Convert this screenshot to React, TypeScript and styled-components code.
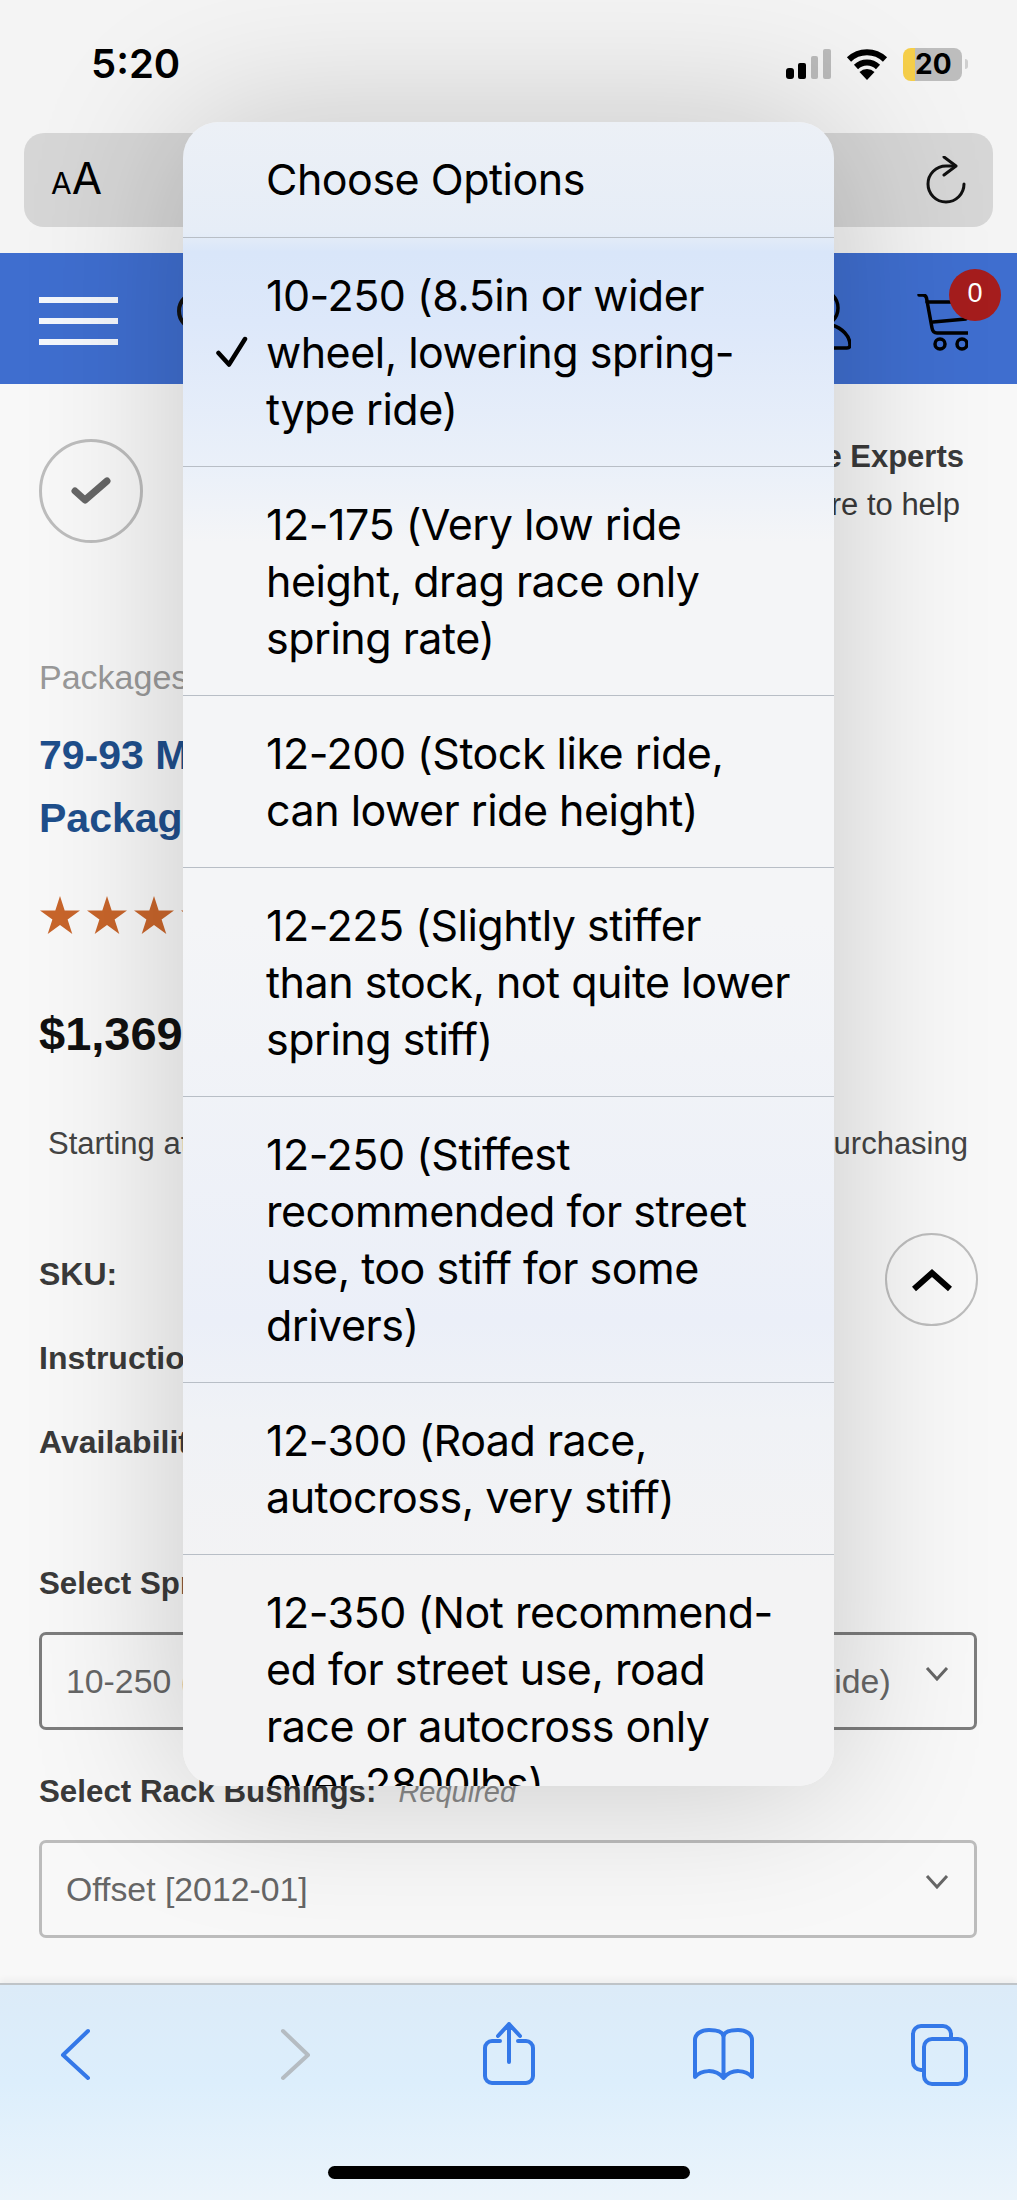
import styled, { createGlobalStyle } from 'styled-components';

const GlobalStyle = createGlobalStyle`
  html, body {
    margin: 0;
    padding: 0;
    background: #f8f8f8;
  }
  * {
    box-sizing: border-box;
  }
`;

const OPTIONS = [
  { id: 'choose', lines: ['Choose Options'] },
  {
    id: '10-250',
    selected: true,
    lines: ['10-250 (8.5in or wider', 'wheel, lowering spring-', 'type ride)'],
  },
  { id: '12-175', lines: ['12-175 (Very low ride', 'height, drag race only', 'spring rate)'] },
  { id: '12-200', lines: ['12-200 (Stock like ride,', 'can lower ride height)'] },
  { id: '12-225', lines: ['12-225 (Slightly stiffer', 'than stock, not quite lower', 'spring stiff)'] },
  {
    id: '12-250',
    lines: ['12-250 (Stiffest', 'recommended for street', 'use, too stiff for some', 'drivers)'],
  },
  { id: '12-300', lines: ['12-300 (Road race,', 'autocross, very stiff)'] },
  {
    id: '12-350',
    lines: ['12-350 (Not recommend-', 'ed for street use, road', 'race or autocross only', 'over 2800lbs)'],
  },
];

const Screen = styled.div`
  position: relative;
  display: flex;
  flex-direction: column;
  width: 1017px;
  height: 2200px;
  overflow: hidden;
  background: #f8f8f8;
  font-family: 'Liberation Sans', Arial, sans-serif;
  color: #333;
`;

const Chrome = styled.div`
  background: #f4f4f4;
  padding-bottom: 26px;
`;

const StatusBar = styled.div`
  display: flex;
  align-items: center;
  justify-content: space-between;
  height: 133px;
  padding: 0 49px 5px 91px;
  font-family: Inter, sans-serif;
`;

const Time = styled.span`
  font-size: 40px;
  font-weight: 600;
  line-height: 40px;
  color: #000;
`;

const StatusIcons = styled.div`
  display: flex;
  align-items: center;
  gap: 15px;
`;

const Battery = styled.div`
  display: flex;
  align-items: center;
  gap: 3px;
`;

const BatteryBody = styled.div`
  width: 59px;
  height: 33px;
  padding-left: 12px;
  border-radius: 8px;
  background: linear-gradient(90deg, #f6cf4a 12px, #bdbdbd 12px);
  font-size: 28px;
  font-weight: 700;
  line-height: 33px;
  color: #000;
`;

const BatteryNub = styled.div`
  width: 3px;
  height: 10px;
  border-radius: 0 4px 4px 0;
  background: #cfcfcf;
`;

const AddressBar = styled.div`
  display: flex;
  align-items: center;
  justify-content: space-between;
  height: 94px;
  margin: 0 24px;
  padding: 0 27px 0 27px;
  border-radius: 20px;
  background: #d6d6d6;
  font-family: Inter, sans-serif;
  color: #000;
`;

const TextSize = styled.span`
  display: flex;
  align-items: baseline;
  font-size: 44px;
  font-weight: 400;
  line-height: 44px;

  & small {
    font-size: 30px;
  }
`;

const Header = styled.div`
  display: flex;
  align-items: center;
  height: 131px;
  padding: 0 49px 0 39px;
  background: #3f6ecf;
`;

const Hamburger = styled.div`
  display: flex;
  flex-direction: column;
  gap: 15px;
  width: 79px;
  margin: 5px 59px 0 0;

  & span {
    height: 6px;
    background: #f4f7fc;
  }
`;

const Logo = styled.svg`
  margin-bottom: 16px;
`;

const HeaderActions = styled.div`
  display: flex;
  align-items: center;
  gap: 65px;
  margin-left: auto;
`;

const CartWrap = styled.div`
  position: relative;
  height: 58px;
  margin-top: 9px;
`;

const CartBadge = styled.span`
  position: absolute;
  top: -25px;
  left: 33px;
  width: 52px;
  height: 52px;
  border-radius: 50%;
  background: #a51d1d;
  font-size: 27px;
  line-height: 48px;
  text-align: center;
  color: #fff;
`;

const Content = styled.div`
  display: flex;
  flex-direction: column;
  padding: 49px 40px 0 39px;
`;

const TrustRow = styled.div`
  display: flex;
  align-items: flex-start;
  justify-content: space-between;
  height: 110px;
  padding-right: 13px;
`;

const CheckCircle = styled.div`
  display: flex;
  align-items: center;
  justify-content: center;
  width: 104px;
  height: 104px;
  margin-top: 6px;
  border: 3px solid #bdbdbd;
  border-radius: 50%;
`;

const TrustText = styled.div`
  text-align: right;
  font-size: 31px;
  line-height: 48px;
  color: #3a3a3a;

  & b {
    display: block;
  }
  & span {
    display: block;
    margin-right: 4px;
  }
`;

const Category = styled.div`
  margin-top: 114px;
  font-size: 34px;
  line-height: 40px;
  color: #999;
`;

const Title = styled.h1`
  margin: 27px 0 0;
  font-size: 41px;
  font-weight: 700;
  line-height: 63px;
  color: #1f4f8c;
`;

const Stars = styled.div`
  display: flex;
  gap: 7px;
  margin: 45px 0 0 1px;
`;

const Price = styled.div`
  margin-top: 71px;
  font-size: 47px;
  font-weight: 700;
  line-height: 56px;
  color: #111;
`;

const Financing = styled.div`
  display: flex;
  justify-content: space-between;
  margin-top: 62px;
  padding: 0 9px 0 9px;
  font-size: 31px;
  line-height: 40px;
  color: #444;
`;

const Specs = styled.div`
  display: flex;
  flex-direction: column;
  gap: 44px;
  margin-top: 90px;
`;

const SpecLabel = styled.div`
  font-size: 32px;
  font-weight: 700;
  line-height: 40px;
  color: #3a3a3a;
`;

const FieldLabel = styled.div<{ $top: number }>`
  display: flex;
  align-items: baseline;
  gap: 22px;
  margin-top: ${(p) => p.$top}px;
  font-size: 31.3px;
  font-weight: 700;
  line-height: 40px;
  color: #3a3a3a;

  & em {
    font-size: 29px;
    font-weight: 400;
    color: #8a8a8a;
  }
`;

const Select = styled.div<{ $active?: boolean }>`
  display: flex;
  align-items: center;
  justify-content: space-between;
  height: 98px;
  margin-top: 28px;
  padding: 0 25px 0 24px;
  border: 3px solid ${(p) => (p.$active ? '#7d7d7d' : '#bcbcbc')};
  border-radius: 7px;
  font-size: 33.8px;
  color: #666;
  white-space: nowrap;

  & svg {
    margin-bottom: 14px;
  }
`;

const ScrollTop = styled.div`
  position: absolute;
  top: 1233px;
  left: 885px;
  display: flex;
  align-items: center;
  justify-content: center;
  width: 93px;
  height: 93px;
  border: 2px solid #bdbdbd;
  border-radius: 50%;
`;

const Toolbar = styled.div`
  display: flex;
  flex-direction: column;
  align-items: center;
  height: 217px;
  margin-top: auto;
  padding-top: 37px;
  border-top: 2px solid #bfc4c8;
  background: linear-gradient(180deg, #dcebf8 0%, #dceefc 45%, #ebf4fb 100%);
  box-shadow: 0 -4px 6px rgba(0, 0, 0, 0.04);
`;

const ToolbarIcons = styled.div`
  display: flex;
  gap: 156px;
  align-self: flex-start;
  padding-left: 45px;
`;

const ToolbarSlot = styled.svg`
  flex: none;
  width: 60px;
  height: 64px;
  overflow: visible;
  fill: none;
  stroke: ${(p) => p.color ?? '#3478e8'};
  stroke-width: 4;
  stroke-linecap: round;
  stroke-linejoin: round;
`;

const HomeIndicator = styled.div`
  width: 362px;
  height: 13px;
  margin-top: auto;
  margin-bottom: 21px;
  border-radius: 7px;
  background: #000;
`;

const Menu = styled.div`
  position: absolute;
  top: 122px;
  left: 183px;
  width: 651px;
  height: 1664px;
  overflow: hidden;
  border-radius: 36px;
  background: linear-gradient(
    180deg,
    #ecf0f6 0,
    #e6edf7 110px,
    #d9e6f9 130px,
    #dde8fa 200px,
    #eaf0f9 344px,
    #f4f5f7 420px,
    #f4f5f7 800px,
    #ebeff8 1200px,
    #f0f2f6 1300px,
    #f3f3f4 1450px
  );
  box-shadow: 0 0 160px rgba(0, 0, 0, 0.2);
  font-family: Inter, sans-serif;
  color: #000;
`;

const MenuRow = styled.div`
  position: relative;
  padding: 29px 20px 28px 83px;
  border-bottom: 1px solid #b8bec6;
  font-size: 43px;
  line-height: 57px;
  letter-spacing: -0.5px;
  white-space: nowrap;

  &:first-child {
    padding-bottom: 29px;
  }
  &:last-child {
    border-bottom: 0;
  }
`;

const MenuLine = styled.span`
  display: block;
`;

const MenuCheck = styled.svg`
  position: absolute;
  top: 50%;
  left: 33px;
  width: 32px;
  height: 32px;
  margin-top: -16px;
`;

const Star = () => (
  <svg width="40" height="40" viewBox="0 0 40 40">
    <path
      d="M20 1l4.700 14.500H40L27.600 24.500 32.300 39 20 30 7.700 39l4.700-14.500L0 15.500h15.300z"
      fill="#c8652b"
    />
  </svg>
);

const Chevron = () => (
  <svg width="24" height="14" viewBox="0 0 24 14" fill="none" stroke="#666" strokeWidth="3">
    <path d="M2 1l10 11L22 1" />
  </svg>
);

const App = () => {
  return (
    <Screen>
      <GlobalStyle />
      <Chrome>
        <StatusBar>
          <Time>5:20</Time>
          <StatusIcons>
            <svg width="45" height="30" viewBox="0 0 45 30">
              <rect x="0" y="19" width="8" height="11" rx="3" fill="#000" />
              <rect x="12" y="14" width="8" height="16" rx="2" fill="#000" />
              <rect x="25" y="7" width="7" height="23" rx="2" fill="#bbb" />
              <rect x="37" y="0" width="8" height="30" rx="2" fill="#bbb" />
            </svg>
            <svg width="42" height="32" viewBox="0 0 42 32">
              <path d="M3 11.500a26 26 0 0 1 36 0M10 19a16 16 0 0 1 22 0" fill="none" stroke="#000" strokeWidth="6" />
              <path d="M21 32l-7.500-8a11 11 0 0 1 15 0z" fill="#000" />
            </svg>
            <Battery>
              <BatteryBody>20</BatteryBody>
              <BatteryNub />
            </Battery>
          </StatusIcons>
        </StatusBar>
        <AddressBar>
          <TextSize>
            <small>A</small>A
          </TextSize>
          <svg width="40" height="48" viewBox="0 0 40 48" fill="none" stroke="#111" strokeWidth="3" strokeLinecap="round" strokeLinejoin="round">
            <path d="M29 10h-9a18 18 0 1 0 18 18" />
            <path d="M18 1l12 9-12 9" />
          </svg>
        </AddressBar>
      </Chrome>

      <Header>
        <Hamburger>
          <span />
          <span />
          <span />
        </Hamburger>
        <Logo width="40" height="40" viewBox="0 0 40 40" fill="none" stroke="#111" strokeWidth="4">
          <circle cx="20" cy="20" r="18" />
        </Logo>
        <HeaderActions>
          <svg width="62" height="62" viewBox="0 0 62 62" fill="none" stroke="#000" strokeWidth="3.500" strokeLinecap="round" strokeLinejoin="round">
            <circle cx="31" cy="20" r="18" />
            <path d="M4 60h54c2 0 3-1 3-3 0-9-8-17-18-20M18 37C8 40 1 48 1 57c0 2 1 3 3 3" />
          </svg>
          <CartWrap>
            <svg width="52" height="58" viewBox="0 0 52 58" fill="none" stroke="#000" strokeWidth="3.500" strokeLinecap="round" strokeLinejoin="round">
              <path d="M3 1h4c2 0 3 1 3.500 3L16 34c.5 3 2 5 5 5h31" />
              <path d="M11 8h26" />
              <path d="M17 28l33-3" />
              <circle cx="24" cy="50" r="5" />
              <circle cx="46" cy="50" r="5" />
            </svg>
            <CartBadge>0</CartBadge>
          </CartWrap>
        </HeaderActions>
      </Header>

      <Content>
        <TrustRow>
          <CheckCircle>
            <svg width="40" height="30" viewBox="0 0 40 30" fill="none" stroke="#666" strokeWidth="7" strokeLinecap="round" strokeLinejoin="round">
              <path d="M4 15l10 9L36 5" />
            </svg>
          </CheckCircle>
          <TrustText>
            <b>Talk to The Experts</b>
            <span>We are here to help</span>
          </TrustText>
        </TrustRow>
        <Category>Packages</Category>
        <Title>
          79-93 Mustang Coilover
          <br />
          Package
        </Title>
        <Stars>
          <Star />
          <Star />
          <Star />
          <Star />
          <Star />
        </Stars>
        <Price>$1,369.00</Price>
        <Financing>
          <span>Starting at</span>
          <span>when purchasing</span>
        </Financing>
        <Specs>
          <SpecLabel>SKU:</SpecLabel>
          <SpecLabel>Instructions:</SpecLabel>
          <SpecLabel>Availability:</SpecLabel>
        </Specs>
        <FieldLabel $top={102}>Select Spring Rate:</FieldLabel>
        <Select $active>
          <span>10-250 (8.5in or wider wheel, lowering spring-type ride)</span>
          <Chevron />
        </Select>
        <FieldLabel $top={42}>
          Select Rack Bushings: <em>Required</em>
        </FieldLabel>
        <Select>
          <span>Offset [2012-01]</span>
          <Chevron />
        </Select>
      </Content>

      <ScrollTop>
        <svg width="40" height="24" viewBox="0 0 40 24" fill="none" stroke="#000" strokeWidth="6">
          <path d="M2 21L20 5l18 16" />
        </svg>
      </ScrollTop>

      <Toolbar>
        <ToolbarIcons>
          <ToolbarSlot viewBox="0 0 60 64">
            <path d="M43 9L18 33l25 23" />
          </ToolbarSlot>
          <ToolbarSlot viewBox="0 0 60 64" color="#b5bcc2">
            <path d="M22 9l25 24-25 23" />
          </ToolbarSlot>
          <ToolbarSlot viewBox="0 0 60 64">
            <path d="M23 19h-8a7 7 0 0 0-7 7v28a7 7 0 0 0 7 7h34a7 7 0 0 0 7-7V26a7 7 0 0 0-7-7h-8" />
            <path d="M32 2v38M21 14L32 2l11 12" />
          </ToolbarSlot>
          <ToolbarSlot viewBox="0 0 60 64">
            <path d="M30.500 15C30.500 10 24 8 16 8 8 8 2 12 2 18v37c6-7 20-9 28.500 1C39 46 53 48 59 55V18c0-6-6-10-14-10-8 0-14.500 2-14.500 7v41" />
          </ToolbarSlot>
          <ToolbarSlot viewBox="0 0 60 64">
            <path d="M15 48h-3a8 8 0 0 1-8-8V12a8 8 0 0 1 8-8h22a8 8 0 0 1 8 8v5" />
            <rect x="15" y="17" width="42" height="45" rx="8" />
          </ToolbarSlot>
        </ToolbarIcons>
        <HomeIndicator />
      </Toolbar>

      <Menu>
        {OPTIONS.map((option) => (
          <MenuRow key={option.id}>
            {option.selected && (
              <MenuCheck viewBox="0 0 32 32" fill="none" stroke="#000" strokeWidth="4.500" strokeLinecap="round" strokeLinejoin="round">
                <path d="M2.500 17L13 28.500 29 3" />
              </MenuCheck>
            )}
            {option.lines.map((line) => (
              <MenuLine key={line}>{line}</MenuLine>
            ))}
          </MenuRow>
        ))}
      </Menu>
    </Screen>
  );
};

export default App;
